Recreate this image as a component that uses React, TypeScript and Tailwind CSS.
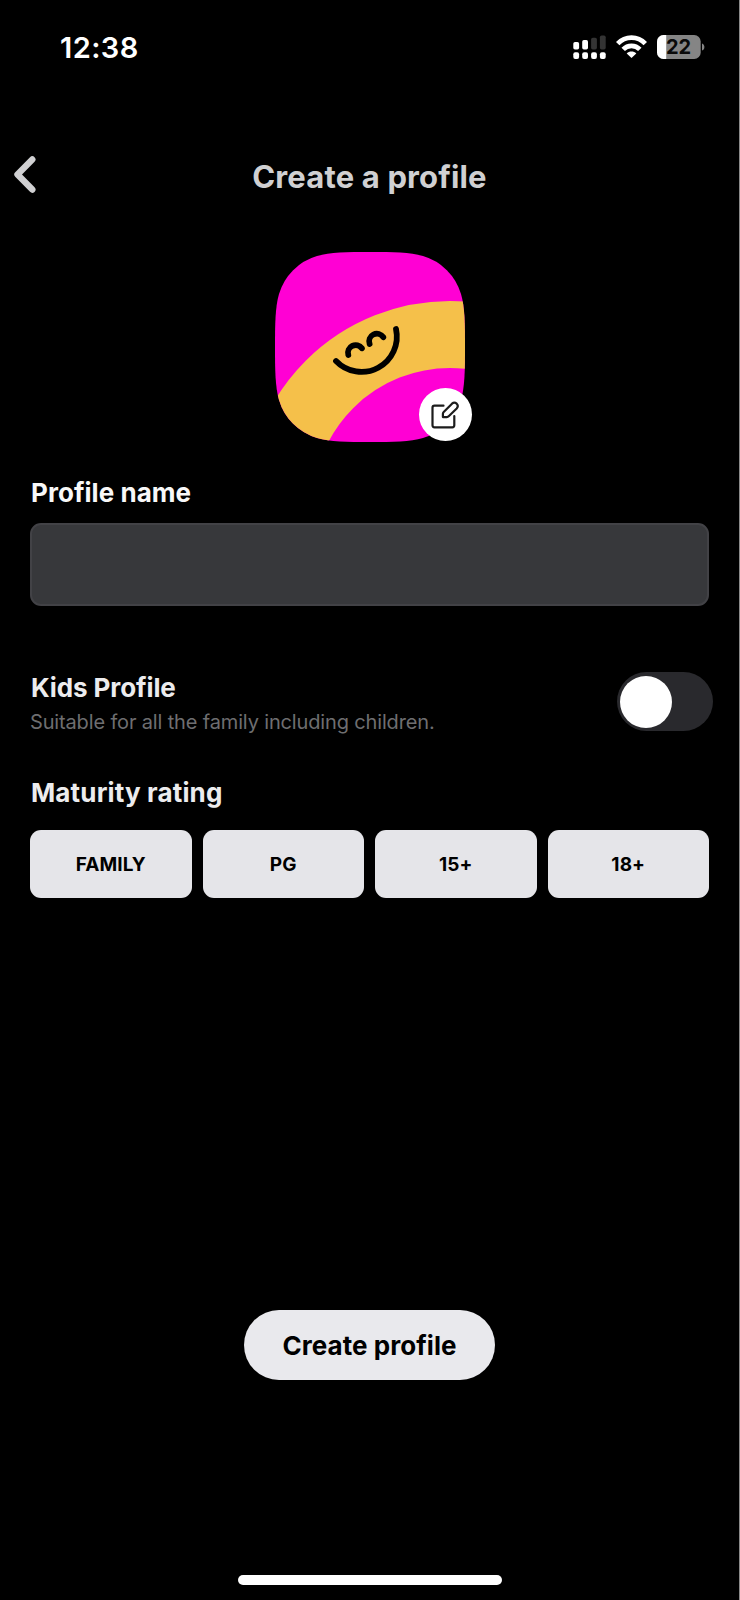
import React, { useState } from 'react'

const RATINGS = ['FAMILY', 'PG', '15+', '18+']

function StatusBar() {
  return (
    <div className="flex h-[95px] items-center justify-between pl-[60px] pr-[34px]">
      <span className="text-[29px] font-semibold leading-8 tracking-[0.4px] text-white">12:38</span>
      <div className="flex items-center gap-2.5 pb-[2px]">
        {/* Dual SIM signal */}
        <svg width="33" height="24" viewBox="0 0 33 24" className="shrink-0">
          <g fill="#fff">
            <rect x="0.3" y="7" width="5.8" height="7.5" rx="1.7" />
            <rect x="9.2" y="5" width="5.8" height="9.5" rx="1.7" />
            <rect x="0.3" y="17.3" width="5.8" height="6.6" rx="1.9" />
            <rect x="9.2" y="17.3" width="5.8" height="6.6" rx="1.9" />
            <rect x="18.1" y="17.3" width="5.8" height="6.6" rx="1.9" />
            <rect x="26.9" y="17.3" width="5.8" height="6.6" rx="1.9" />
          </g>
          <g fill="#343434">
            <rect x="18.1" y="2.7" width="5.8" height="11.8" rx="1.7" />
            <rect x="26.9" y="0.6" width="5.8" height="13.9" rx="1.7" />
          </g>
        </svg>
        {/* Wifi */}
        <svg width="31" height="24" viewBox="0 0 31 24" className="shrink-0">
          <g fill="none" stroke="#fff" strokeWidth="4.8">
            <path d="M1.7 8.6C9.3 0.6 21.7 0.6 29.3 8.6" />
            <path d="M7.2 14.3C11.7 9.6 19.3 9.6 23.8 14.3" />
          </g>
          <path d="M15.5 23L10.7 18.4C13.4 15.8 17.6 15.8 20.3 18.4Z" fill="#fff" />
        </svg>
        {/* Battery */}
        <svg width="48" height="24" viewBox="0 0 48 24" className="shrink-0">
          <defs>
            <clipPath id="battery">
              <rect x="0" y="0" width="43.7" height="24" rx="6.5" />
            </clipPath>
          </defs>
          <g clipPath="url(#battery)">
            <rect width="44" height="24" fill="#858585" />
            <rect width="9.2" height="24" fill="#fff" />
          </g>
          <path d="M45 8.4C48.2 9.4 48.2 14.6 45 15.6Z" fill="#858585" />
          <text x="21.6" y="19.1" textAnchor="middle" fontSize="20" fontWeight="700" fill="#0a0a0a">
            22
          </text>
        </svg>
      </div>
    </div>
  )
}

function Avatar() {
  return (
    <div className="relative mx-auto h-[190px] w-[190px]">
      <svg width="190" height="190" viewBox="0 0 190 190">
        <defs>
          <clipPath id="squircle">
            <path d="M95 0C118 0 135 0.200 148 4A56 56 0 0 1 186 42C189.800 55 190 72 190 95C190 118 189.800 135 186 148A56 56 0 0 1 148 186C135 189.800 118 190 95 190C72 190 55 189.800 42 186A56 56 0 0 1 4 148C0.200 135 0 118 0 95C0 72 0.200 55 4 42A56 56 0 0 1 42 4C55 0.200 72 0 95 0Z" />
          </clipPath>
        </defs>
        <g clipPath="url(#squircle)">
          <rect width="190" height="190" fill="#ff00d4" />
          <circle cx="175" cy="253" r="170.5" fill="none" stroke="#f5c04a" strokeWidth="67" />
        </g>
        <g fill="none" stroke="#000" strokeWidth="5.8" strokeLinecap="round">
          <path d="M61 109A35.3 35.3 0 0 0 121 77" />
          <path d="M73.300 103A7.700 7.700 0 0 1 86.900 96.300" />
          <path d="M94.600 92A7.700 7.700 0 0 1 108.300 85.200" />
        </g>
      </svg>
      <button
        type="button"
        title="Edit avatar"
        className="absolute left-[144px] top-[136px] flex h-[53px] w-[53px] items-center justify-center rounded-full bg-white"
      >
        <svg width="30" height="30" viewBox="0 0 30 30" fill="none" stroke="#1c1c1c" strokeWidth="2.2" strokeLinejoin="round" strokeLinecap="round">
          <path d="M13.5 5.7H4.5Q2.5 5.7 2.5 7.7V25.3Q2.5 27.3 4.5 27.3H22.3Q24.3 27.3 24.3 25.3V16" />
          <path d="M12.9 17.1V13.8Q12.9 12.8 13.7 12L22 3.7Q24.3 1.7 26.7 3.7Q28.9 6 26.7 8.5L18.7 16.3Q17.9 17.1 16.9 17.1Z" />
        </svg>
      </button>
    </div>
  )
}

export default function App() {
  const [name, setName] = useState('')
  const [kids, setKids] = useState(false)

  return (
    <div className="flex h-[1600px] w-[740px] flex-col border-r border-[#8a8a8a] bg-black font-['Inter',sans-serif]">
      <StatusBar />

      {/* Header */}
      <header className="mt-[49px] grid h-16 grid-cols-[60px_1fr_60px] items-center">
        <button type="button" title="Back" className="pl-3">
          <svg width="26" height="42" viewBox="0 0 26 42" fill="none" stroke="#d0d0d2" strokeWidth="6.4" strokeLinecap="round" strokeLinejoin="round">
            <path d="M20.3 4.5L5.5 19.5L20.3 34.6" />
          </svg>
        </button>
        <h1 className="whitespace-nowrap pt-px text-center text-[31px] font-bold leading-10 tracking-[0.15px] text-[#d0d0d2]">
          Create a profile
        </h1>
      </header>

      <div className="mt-11">
        <Avatar />
      </div>

      <main className="flex flex-col px-[30px]">
        <label htmlFor="profile-name" className="mt-[35px] pl-px text-[26px] font-bold leading-8 tracking-[0.05px] text-[#f8f8f8]">
          Profile name
        </label>
        <input
          id="profile-name"
          value={name}
          onChange={(e) => setName(e.target.value)}
          className="mt-3.5 h-[83px] rounded-[11px] border-2 border-[#424246] bg-[#37383b] px-5 text-2xl text-white outline-none"
        />

        <div className="mt-[65px] flex h-[60px] justify-between">
          <div className="whitespace-nowrap">
            <h2 className="pl-px pt-px text-[26px] font-bold leading-8 tracking-[-0.1px] text-[#ececee]">Kids Profile</h2>
            <p className="mt-1 text-xl leading-7 tracking-[-0.15px] text-[#6e6e70]">Suitable for all the family including children.</p>
          </div>
          <button
            type="button"
            role="switch"
            aria-checked={kids}
            onClick={() => setKids(!kids)}
            className={`-mr-1 mt-px flex h-[59px] w-24 items-center rounded-full bg-[#29292d] px-[3px] ${kids ? 'justify-end' : 'justify-start'}`}
          >
            <span className="h-[52px] w-[52px] rounded-full bg-white" />
          </button>
        </div>

        <h2 className="mt-[46px] pl-px text-[26px] font-bold leading-8 tracking-[0.15px] text-[#ececee]">Maturity rating</h2>
        <div className="mt-[21px] grid grid-cols-4 gap-[11px]">
          {RATINGS.map((rating) => (
            <button
              key={rating}
              type="button"
              className="h-[68px] rounded-[11px] bg-[#e5e5e9] pt-0.5 text-[19px] font-bold tracking-[0.1px] text-black"
            >
              {rating}
            </button>
          ))}
        </div>
      </main>

      <button
        type="button"
        className="mx-auto mt-[412px] h-[70px] w-[251px] rounded-full bg-[#e9e9ed] pt-px text-[26px] font-bold tracking-[0.05px] text-black"
      >
        Create profile
      </button>

      {/* Home indicator */}
      <div className="mx-auto mb-[15px] mt-auto h-2.5 w-[264px] rounded-full bg-white" />
    </div>
  )
}
